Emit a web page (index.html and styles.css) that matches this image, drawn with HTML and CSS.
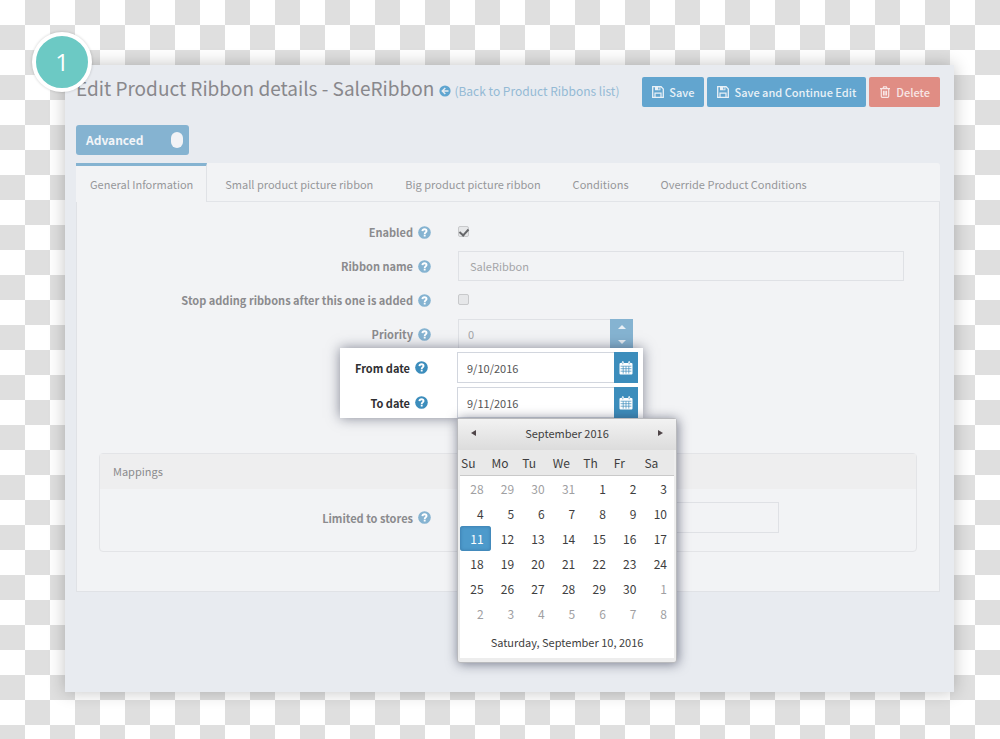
FILE: index.html
```html
<!DOCTYPE html>
<html lang="en">
<head>
<meta charset="utf-8">
<title>Edit Product Ribbon details</title>
<link rel="stylesheet" href="styles.css">
</head>
<body>
<svg class="sprite" aria-hidden="true">
  <symbol id="help" viewBox="0 0 14 14"><circle cx="7" cy="7" r="6.800" fill="currentColor"/><path d="M4.700 5.500C4.900 4.100 5.800 3.500 7 3.500c1.300 0 2.200.7 2.200 1.800C9.200 6.700 7.200 6.700 7.200 8.500" fill="none" stroke="#fff" stroke-width="2"/><rect x="6.200" y="9.300" width="2" height="2" fill="#fff"/></symbol>
  <symbol id="floppy" viewBox="0 0 12 12"><path d="M.7.7h8.400l2.200 2.200v8.400H.7z" fill="none" stroke="currentColor" stroke-width="1.300"/><path d="M3 .7h5.400v3.500H3zM6.200 1.300v2.200h1.300V1.300z" fill="currentColor" fill-rule="evenodd"/><path d="M3 11V7.200h6V11" fill="none" stroke="currentColor" stroke-width="1.200"/></symbol>
  <symbol id="trash" viewBox="0 0 12 12"><path d="M1 2.700h10M4 2.500l.6-1.600h2.800L8 2.500M2.300 3v7.200c0 .7.400 1.200 1 1.200h5.400c.6 0 1-.5 1-1.200V3M4.500 4.800v4.700M6 4.800v4.700M7.500 4.800v4.700" fill="none" stroke="currentColor" stroke-width="1.200"/></symbol>
  <symbol id="calendar" viewBox="0 0 14 14"><path d="M1.500 2h1.300V1.200Q2.800.2 3.800.2t1 1V2h4.400v-.8q0-1 1-1t1 1V2h1.300q1 0 1 1v9.600q0 1-1 1h-11q-1 0-1-1V3q0-1 1-1z" fill="#fff"/><path d="M1.600 5.200h10.800M1.600 7.700h10.800M1.600 10.200h10.800M4.200 5.200v7.400M7 5.200v7.400M9.800 5.200v7.400" stroke="#3c8dbc" stroke-width=".7"/><path d="M3.800 1.500v1.800M10.200 1.500v1.800" stroke="#3c8dbc" stroke-width=".7"/></symbol>
</svg>
<main class="panel">
  <span class="step">1</span>
  <header class="head">
    <h1 class="title">Edit Product Ribbon details - SaleRibbon</h1>
    <a class="back" href="#"><svg class="back-icon" viewBox="0 0 12 12"><circle cx="6" cy="6" r="5.600" fill="#5fa5d0"/><path d="M9.500 6H3.500M6.300 3L3.300 6l3 3" fill="none" stroke="#e8ebf0" stroke-width="1.500"/></svg>(Back to Product Ribbons list)</a>
    <div class="actions">
      <button class="btn" type="button"><svg class="btn-icon"><use href="#floppy"/></svg>Save</button>
      <button class="btn" type="button"><svg class="btn-icon"><use href="#floppy"/></svg>Save and Continue Edit</button>
      <button class="btn danger" type="button"><svg class="btn-icon"><use href="#trash"/></svg>Delete</button>
    </div>
  </header>
  <button class="advanced" type="button">Advanced<span class="knob"></span></button>
  <section class="tabs">
    <nav class="tab-bar">
      <button class="tab active" type="button">General Information</button>
      <button class="tab" type="button">Small product picture ribbon</button>
      <button class="tab" type="button">Big product picture ribbon</button>
      <button class="tab" type="button">Conditions</button>
      <button class="tab" type="button">Override Product Conditions</button>
    </nav>
    <form class="form">
      <div class="row"><label class="label" for="enabled">Enabled<svg class="help"><use href="#help"/></svg></label><input class="check" id="enabled" type="checkbox" checked></div>
      <div class="row"><label class="label" for="name">Ribbon name<svg class="help"><use href="#help"/></svg></label><input class="text wide" id="name" type="text" value="SaleRibbon"></div>
      <div class="row"><label class="label" for="stop">Stop adding ribbons after this one is added<svg class="help"><use href="#help"/></svg></label><input class="check" id="stop" type="checkbox"></div>
      <div class="row"><label class="label" for="priority">Priority<svg class="help"><use href="#help"/></svg></label>
        <div class="spinner"><input class="text spin-text" id="priority" type="text" value="0"><div class="spin-buttons"><button class="spin up" type="button" aria-label="Increase"></button><button class="spin down" type="button" aria-label="Decrease"></button></div></div>
      </div>
      <div class="highlight">
        <div class="date-row"><label class="label strong" for="from">From date<svg class="help"><use href="#help"/></svg></label>
          <div class="date"><input class="date-text" id="from" type="text" value="9/10/2016"><button class="date-button" type="button" aria-label="Pick from date"><svg class="cal-icon"><use href="#calendar"/></svg></button></div></div>
        <div class="date-row"><label class="label strong" for="to">To date<svg class="help"><use href="#help"/></svg></label>
          <div class="date"><input class="date-text" id="to" type="text" value="9/11/2016"><button class="date-button" type="button" aria-label="Pick to date"><svg class="cal-icon"><use href="#calendar"/></svg></button>
            <div class="calendar">
              <div class="cal-head"><button class="arrow prev" type="button" aria-label="Previous month"></button><span>September 2016</span><button class="arrow next" type="button" aria-label="Next month"></button></div>
              <table class="days">
                <thead><tr><th>Su</th><th>Mo</th><th>Tu</th><th>We</th><th>Th</th><th>Fr</th><th>Sa</th></tr></thead>
                <tbody>
                  <tr><td class="other">28</td><td class="other">29</td><td class="other">30</td><td class="other">31</td><td>1</td><td>2</td><td>3</td></tr>
                  <tr><td>4</td><td>5</td><td>6</td><td>7</td><td>8</td><td>9</td><td>10</td></tr>
                  <tr><td class="selected">11</td><td>12</td><td>13</td><td>14</td><td>15</td><td>16</td><td>17</td></tr>
                  <tr><td>18</td><td>19</td><td>20</td><td>21</td><td>22</td><td>23</td><td>24</td></tr>
                  <tr><td>25</td><td>26</td><td>27</td><td>28</td><td>29</td><td>30</td><td class="other">1</td></tr>
                  <tr><td class="other">2</td><td class="other">3</td><td class="other">4</td><td class="other">5</td><td class="other">6</td><td class="other">7</td><td class="other">8</td></tr>
                </tbody>
              </table>
              <div class="cal-foot">Saturday, September 10, 2016</div>
            </div>
          </div></div>
      </div>
      <fieldset class="mappings">
        <div class="map-head">Mappings</div>
        <div class="map-row"><label class="label" for="stores">Limited to stores<svg class="help"><use href="#help"/></svg></label><input class="text stores" id="stores" type="text"></div>
      </fieldset>
    </form>
  </section>
</main>
</body>
</html>
```
FILE: styles.css
```css
* { box-sizing: border-box; }

body {
  margin: 0;
  min-height: 100vh;
  padding: 65px 46px 47px 65px;
  display: flex;
  font: 11px/18px "Noto Sans CJK SC", "Open Sans", sans-serif;
  color: #8b8b8d;
  background: repeating-conic-gradient(#dfdfdf 0 25%, #fff 0 50%) 0 0 / 50px 50px;
}

button, input { font: inherit; color: inherit; margin: 0; }
button { border: 0; padding: 0; background: none; }
.sprite { display: none; }

.panel {
  position: relative;
  flex: 1;
  min-width: 0;
  padding: 12px 14px 20px 11px;
  background: #e8ebf0;
  box-shadow: 0 0 16px rgba(0, 0, 0, 0.24);
}

.step {
  position: absolute;
  left: -33px;
  top: -33px;
  width: 60px;
  height: 60px;
  border: 4px solid #fff;
  border-radius: 50%;
  background: #6cc9c4;
  box-shadow: 0 0 3px rgba(0, 0, 0, 0.2);
  color: #fff;
  font: 400 24px/52px "Open Sans", sans-serif;
  text-align: center;
}

.head { display: flex; align-items: center; height: 30px; }
.title { margin: 0 5px 8px 0; font-size: 19px; line-height: 24px; font-weight: 400; color: #88888c; white-space: nowrap; }
.back { display: flex; align-items: center; gap: 3px; padding-bottom: 2px; font-size: 12px; color: #94bad5; text-decoration: none; white-space: nowrap; }
.back-icon { width: 12px; height: 12px; }
.actions { display: flex; gap: 3px; margin-left: auto; }
.btn {
  display: flex;
  align-items: center;
  gap: 5px;
  height: 30px;
  padding: 0 10px;
  border-radius: 2px;
  background: #62a5cf;
  color: #e9f1f7;
  font-weight: 500;
  white-space: nowrap;
}
.btn-icon { width: 12px; height: 12px; }
.danger { background: #e08d84; color: #f8e6e5; }

.advanced {
  display: flex;
  align-items: center;
  justify-content: space-between;
  width: 113px;
  height: 30px;
  margin: 18px 0 8px;
  padding: 0 6px 0 10px;
  border-radius: 3px;
  background: #85b3d1;
  color: #f3f5f8;
  font-size: 12px;
  font-weight: 700;
}
.knob { width: 12px; height: 16px; border-radius: 6px; background: #f2f3f6; }

.tabs { background: #f2f3f5; border-radius: 3px; }
.tab-bar { display: flex; height: 39px; border-bottom: 1px solid #e2e4e8; }
.tab { padding: 3px 16px 0; color: #96979a; white-space: nowrap; }
.active {
  height: 39px;
  margin-right: 2px;
  padding: 0 13px 0 14px;
  border-top: 3px solid #85b3d1;
  border-right: 1px solid #e0e2e6;
  background: #f2f3f5;
}

.form {
  display: flex;
  flex-direction: column;
  gap: 4px;
  padding: 15px 22px 39px;
  border: 1px solid #e0e2e6;
  border-top: 0;
}
.row, .map-row { display: grid; grid-template-columns: 332px minmax(0, 1fr); column-gap: 27px; align-items: center; }
.row { height: 30px; }
.label { display: flex; align-items: center; justify-content: flex-end; gap: 5px; font-weight: 700; color: #8b8b8e; white-space: nowrap; }
.help { flex: none; width: 13px; height: 13px; color: #85b3d1; }
.text { height: 30px; min-width: 0; padding: 0 11px; border: 1px solid #dfe1e5; border-radius: 0; background: transparent; color: #a4a5a8; }
.wide { width: calc(100% - 13px); }
.check {
  display: grid;
  justify-items: center;
  width: 11px;
  height: 11px;
  margin-bottom: 2px;
  appearance: none;
  border: 1px solid #c8c9cb;
  border-radius: 2px;
  background: #e6e7e9;
}
.check:checked::before { content: ""; width: 4px; height: 7px; border: solid #66676a; border-width: 0 2px 2px 0; transform: rotate(42deg); }

.spinner { display: flex; width: 175px; }
.spin-text { flex: 1; padding: 0 9px; border-right: 0; }
.spin-buttons { display: grid; width: 23px; background: #85b3d1; }
.spin { display: grid; place-items: center; }
.spin::before { content: ""; border: 4px solid transparent; }
.up::before { border-top: 0; border-bottom-color: #e8eff5; }
.down::before { border-bottom: 0; border-top-color: #e8eff5; }

.highlight {
  z-index: 1;
  display: grid;
  gap: 4px;
  align-self: flex-start;
  width: 303px;
  margin: -5px 0 0 241px;
  padding: 4px 5px 0 13px;
  background: #fff;
  box-shadow: 0 0 12px rgba(40, 45, 70, 0.55);
}
.date-row { display: grid; grid-template-columns: 75px 181px; justify-content: space-between; align-items: center; }
.strong { color: #303033; }
.strong .help { color: #3c8dbc; }
.date { position: relative; display: flex; height: 31px; }
.date-text { flex: 1; min-width: 0; padding: 0 9px; border: 1px solid #d2d6de; border-right: 0; border-radius: 0; background: #fff; color: #555; }
.date-button { display: grid; place-items: center; width: 24px; background: #3c8dbc; }
.cal-icon { width: 14px; height: 14px; }

.calendar {
  position: absolute;
  top: 100%;
  left: 0;
  width: 220px;
  padding: 0 2px 4px;
  border: 1px solid #b9babd;
  border-radius: 3px;
  background: #ededed;
  box-shadow: 1px 1px 12px rgba(40, 45, 70, 0.6);
  color: #3e3e40;
}
.cal-head { display: flex; align-items: center; justify-content: space-between; height: 31px; margin: 0 -2px; padding: 0 13px 3px; background: linear-gradient(#f2f2f2, #dcdcdc); }
.arrow::before { content: ""; display: block; border: 3px solid transparent; }
.prev::before { border-left: 0; border-right: 5px solid #4f4548; }
.next::before { border-right: 0; border-left: 5px solid #4f4548; }
.days { width: 100%; table-layout: fixed; border-collapse: separate; border-spacing: 0; background: #fff; font-size: 12px; }
.days th { height: 26px; padding: 0 1px; border-bottom: 1px solid #c9c9c9; background: #e9e9e9; font-weight: 400; text-align: left; }
.days td { height: 25px; padding: 0 7px 0 0; text-align: right; }
.days .other { color: #a0a0a2; }
.days .selected { border-radius: 3px; background: #4d9acb; box-shadow: inset 0 0 3px 1px #3f83b3; color: #fff; }
.cal-foot { padding: 7px 0 6px; background: #fff; line-height: 19px; text-align: center; }

.mappings { min-width: 0; margin: 31px 0 0; padding: 0; border: 1px solid #e3e4e7; border-radius: 4px; }
.map-head { padding: 8px 13px 9px; background: #eeeeef; }
.map-row { grid-template-columns: 331px minmax(0, 1fr); padding: 13px 0 18px; }
.stores { width: 321px; height: 31px; }
```
